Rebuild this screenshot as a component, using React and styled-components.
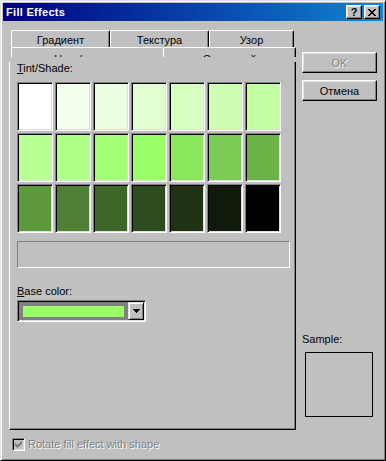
import React from 'react';
import styled, { createGlobalStyle } from 'styled-components';

const GlobalStyle = createGlobalStyle`
  body {
    margin: 0;
    background: #c0c0c0;
    font-family: 'Liberation Sans', Arial, sans-serif;
    font-size: 11px;
  }
`;

const Window = styled.div`
  box-sizing: border-box;
  width: 386px;
  height: 461px;
  padding: 2px;
  background: #c0c0c0;
  border: 1px solid;
  border-color: #dfdfdf #000 #000 #dfdfdf;
  box-shadow: inset 1px 1px #fff, inset -1px -1px #808080;
  display: flex;
  flex-direction: column;
  color: #000;
`;

const TitleBar = styled.div`
  height: 18px;
  display: flex;
  align-items: center;
  padding: 0 3px 0 3px;
  background: linear-gradient(to right, #000080, #1084d0);
`;

const Title = styled.div`
  flex: 1;
  color: #fff;
  font-weight: bold;
  font-size: 11px;
  letter-spacing: 0.3px;
`;

const TitleButton = styled.div`
  box-sizing: border-box;
  width: 16px;
  height: 14px;
  margin-left: ${(p) => p.$gap || 0}px;
  background: #c0c0c0;
  border: 1px solid;
  border-color: #fff #000 #000 #fff;
  box-shadow: inset -1px -1px #808080, inset 1px 1px #dfdfdf;
  display: flex;
  align-items: center;
  justify-content: center;
  font-weight: bold;
  font-size: 11px;
  line-height: 1;
`;

const Body = styled.div`
  flex: 1;
  display: flex;
  padding-left: 6px;
`;

const LeftColumn = styled.div`
  width: 287px;
  padding-top: 9px;
  display: flex;
  flex-direction: column;
`;

const TabRow = styled.div`
  display: flex;
  padding-left: 2px;
  height: ${(p) => p.$height}px;
`;

/* front-row labels are overdrawn by the page in the original, only their tops show */
const Tab = styled.div`
  box-sizing: border-box;
  width: ${(p) => p.$width}px;
  height: 100%;
  border-top: 1px solid #fff;
  border-left: 1px solid #fff;
  border-right: ${(p) => (p.$noRight ? 'none' : '1px solid #000')};
  box-shadow: ${(p) => (p.$noRight ? 'none' : 'inset -1px 0 #808080')};
  border-top-left-radius: 2px;
  border-top-right-radius: 2px;
  text-align: center;
  line-height: 13px;
  padding-top: ${(p) => (p.$front ? 5 : 3)}px;
  overflow: hidden;
  white-space: nowrap;
`;

const TabGap = styled.div`
  height: 5px;
`;

const Panel = styled.div`
  box-sizing: border-box;
  height: 368px;
  padding: 0 7px;
  border-left: 1px solid #fff;
  border-right: 1px solid #000;
  border-bottom: 1px solid #000;
  box-shadow: inset -1px -1px #808080;
`;

const Label = styled.div`
  line-height: 13px;
  margin-top: ${(p) => p.$top || 0}px;
  color: ${(p) => (p.$disabled ? '#808080' : '#000')};
  text-shadow: ${(p) => (p.$disabled ? '1px 1px 0 #fff' : 'none')};
`;

const Grid = styled.div`
  margin-top: 7px;
  display: grid;
  grid-template-columns: repeat(7, 36px);
  grid-auto-rows: 49px;
  gap: 2px;
`;

const Cell = styled.div`
  box-sizing: border-box;
  background: ${(p) => p.$color};
  border: 1px solid;
  border-color: #808080 #fff #fff #808080;
  box-shadow: inset 1px 1px #000, inset -1px -1px #dfdfdf;
`;

const Field = styled.div`
  box-sizing: border-box;
  margin-top: 8px;
  width: 273px;
  height: 27px;
  border: 1px solid;
  border-color: #808080 #fff #fff #808080;
`;

const Combo = styled.div`
  box-sizing: border-box;
  margin-top: 2px;
  width: 129px;
  height: 22px;
  display: flex;
  border: 1px solid;
  border-color: #808080 #fff #fff #808080;
  box-shadow: inset 1px 1px #000, inset -1px -1px #dfdfdf;
  padding: 1px;
`;

const ComboItem = styled.div`
  box-sizing: border-box;
  width: 109px;
  height: 18px;
  padding: 4px 4px 3px 4px;
  background: #808080;
`;

const Swatch = styled.div`
  height: 100%;
  background: ${(p) => p.$color};
`;

const ComboButton = styled.div`
  box-sizing: border-box;
  width: 16px;
  height: 18px;
  background: #c0c0c0;
  border: 1px solid;
  border-color: #dfdfdf #000 #000 #dfdfdf;
  box-shadow: inset 1px 1px #fff, inset -1px -1px #808080;
  display: flex;
  align-items: center;
  justify-content: center;
`;

const CheckRow = styled.div`
  margin-top: 8px;
  margin-left: 3px;
  display: flex;
  align-items: center;
  gap: 3px;
`;

const CheckBox = styled.div`
  box-sizing: border-box;
  width: 13px;
  height: 13px;
  background: #c0c0c0;
  border: 1px solid;
  border-color: #808080 #fff #fff #808080;
  box-shadow: inset 1px 1px #000, inset -1px -1px #dfdfdf;
  display: flex;
  align-items: center;
  justify-content: center;
`;

const RightColumn = styled.div`
  width: 75px;
  margin-left: 6px;
  padding-bottom: 41px;
  display: flex;
  flex-direction: column;
`;

const Button = styled.div`
  box-sizing: border-box;
  width: 75px;
  height: 21px;
  margin-top: ${(p) => p.$top}px;
  border: 1px solid;
  border-color: #fff #000 #000 #fff;
  box-shadow: inset -1px -1px #808080, inset 1px 1px #dfdfdf;
  display: flex;
  align-items: center;
  justify-content: center;
  color: ${(p) => (p.$disabled ? '#808080' : '#000')};
  text-shadow: ${(p) => (p.$disabled ? '1px 1px 0 #fff' : 'none')};
`;

const SampleLabel = styled.div`
  margin-top: auto;
  line-height: 13px;
`;

const SampleBox = styled.div`
  box-sizing: border-box;
  margin: 6px 0 0 3px;
  width: 68px;
  height: 65px;
  border: 1px solid #000;
`;

const base = [153, 255, 102];

const toHex = (rgb) =>
  '#' + rgb.map((v) => Math.round(v).toString(16).padStart(2, '0')).join('');

// white -> base color -> black in 20 steps
const colors = Array.from({ length: 21 }, (_, i) => {
  if (i <= 10) {
    const t = i / 10;
    return toHex(base.map((c) => 255 + (c - 255) * t));
  }
  const s = (20 - i) / 10;
  return toHex(base.map((c) => c * s));
});

const Pixels = ({ rows, color, w, h }) => (
  <svg width={w} height={h} shapeRendering="crispEdges">
    {rows.map((row, y) =>
      row.split('').map((ch, x) =>
        ch === 'X' ? <rect key={x + '-' + y} x={x} y={y} width="1" height="1" fill={color} /> : null
      )
    )}
  </svg>
);

const closeGlyph = ['XX....XX', '.XX..XX.', '..XXXX..', '...XX...', '..XXXX..', '.XX..XX.', 'XX....XX'];
const arrowGlyph = ['XXXXXXX', '.XXXXX.', '..XXX..', '...X...'];
const checkGlyph = ['......X', '.....XX', 'X...XXX', 'XX.XXX.', 'XXXXX..', '.XXX...', '..X....'];

export default function App() {
  return (
    <>
      <GlobalStyle />
      <Window>
        <TitleBar>
          <Title>Fill Effects</Title>
          <TitleButton>?</TitleButton>
          <TitleButton $gap={2}>
            <Pixels rows={closeGlyph} color="#000" w={8} h={7} />
          </TitleButton>
        </TitleBar>
        <Body>
          <LeftColumn>
            <TabRow $height={17}>
              <Tab $width={99}>Градиент</Tab>
              <Tab $width={99}>Текстура</Tab>
              <Tab $width={85}>Узор</Tab>
            </TabRow>
            <TabRow $height={10}>
              <Tab $width={152} $front $noRight>Цвет/оттенок</Tab>
              <Tab $width={133} $front>Сплошной</Tab>
            </TabRow>
            <TabGap />
            <Panel>
              <Label>
                <u>T</u>int/Shade:
              </Label>
              <Grid>
                {colors.map((c, i) => (
                  <Cell key={i} $color={c} />
                ))}
              </Grid>
              <Field />
              <Label $top={17}>
                <u>B</u>ase color:
              </Label>
              <Combo>
                <ComboItem>
                  <Swatch $color={colors[10]} />
                </ComboItem>
                <ComboButton>
                  <Pixels rows={arrowGlyph} color="#000" w={7} h={4} />
                </ComboButton>
              </Combo>
            </Panel>
            <CheckRow>
              <CheckBox>
                <Pixels rows={checkGlyph} color="#808080" w={7} h={7} />
              </CheckBox>
              <Label $disabled>Rotate fill effect with shape</Label>
            </CheckRow>
          </LeftColumn>
          <RightColumn>
            <Button $top={31} $disabled>
              OK
            </Button>
            <Button $top={7}>Отмена</Button>
            <SampleLabel>Sample:</SampleLabel>
            <SampleBox />
          </RightColumn>
        </Body>
      </Window>
    </>
  );
}
